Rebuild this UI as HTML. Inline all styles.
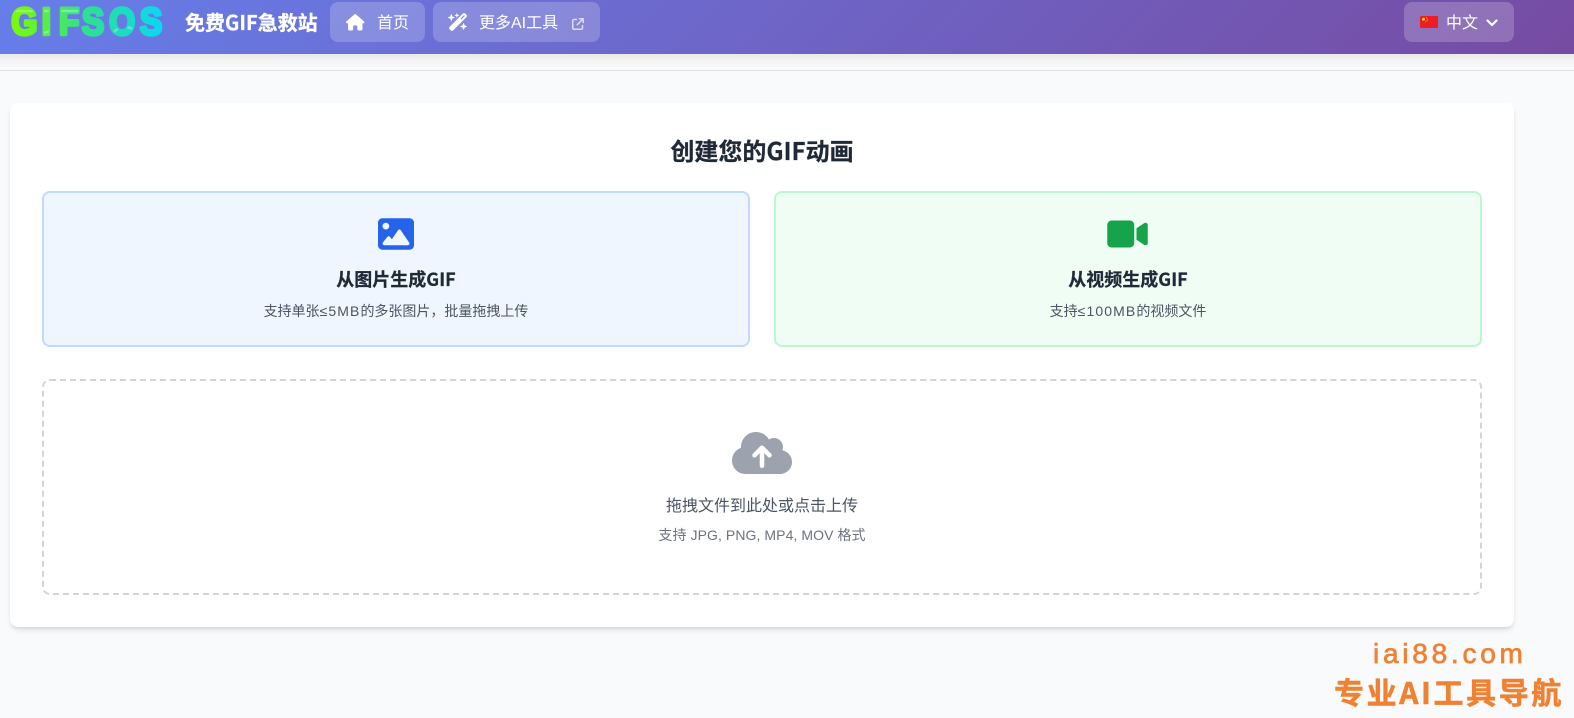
<!DOCTYPE html>
<html lang="zh-CN">
<head>
<meta charset="utf-8">
<title>GIFSOS</title>
<style>
*{box-sizing:border-box;margin:0;padding:0}
html,body{width:1574px;height:718px;overflow:hidden;background:#f9fafb;font-family:"Liberation Sans","Noto Sans CJK SC",sans-serif;color:#1f2937}
.abs,.abs-c{position:absolute;white-space:nowrap}
.abs-c{text-align:center}
.b{font-family:"Noto Sans CJK SC","Liberation Sans",sans-serif;font-weight:700;-webkit-text-stroke:.25px currentColor}
.ls{letter-spacing:1.1px}
#strip{position:absolute;left:0;top:54px;width:1574px;height:17px;background:linear-gradient(#e9e9ea 0%,#f4f4f5 45%,#fbfbfb 100%);border-bottom:1px solid #e2e4e9}
#hdr{position:absolute;left:0;top:0;width:1574px;height:54px;background:linear-gradient(135deg,#667eea 0%,#764ba2 100%)}
.btn{position:absolute;top:2px;height:40px;border-radius:8px;background:rgba(255,255,255,.2)}
.btn span{position:absolute;top:2px;line-height:40px;font-size:16px;color:#fff;white-space:nowrap}
svg{position:absolute;display:block}
#card{position:absolute;left:10px;top:103px;width:1504px;height:524px;background:#fff;border-radius:8px;box-shadow:0 4px 6px -1px rgba(0,0,0,.1),0 2px 4px -2px rgba(0,0,0,.1)}
.opt{position:absolute;top:191px;width:708px;height:156px;border-radius:8px;border:2px solid}
#drop{position:absolute;left:42px;top:379px;width:1440px;height:216px;border:2px dashed #d1d5db;border-radius:8px}
</style>
</head>
<body>
<div id="strip"></div>
<div id="hdr">
  <svg style="left:0;top:0" width="180" height="54" viewBox="0 0 180 54">
    <defs>
      <linearGradient id="lg" gradientUnits="userSpaceOnUse" x1="11" y1="0" x2="182" y2="0"><stop offset="0" stop-color="#7cfc00"/><stop offset=".5" stop-color="#2fe08f"/><stop offset="1" stop-color="#0bd8ee"/></linearGradient>
      <clipPath id="cl"><text transform="scale(.88 1)" x="13 47.5 67 93 124 159" y="34.3" font-family="Liberation Sans" font-weight="700" font-size="38">GIFSOS</text></clipPath>
    </defs>
    <g transform="scale(.88 1)">
      <text x="13 47.5 67 93 124 159" y="34.3" font-family="Liberation Sans" font-weight="700" font-size="38" fill="url(#lg)" stroke="url(#lg)" stroke-width="3.4" stroke-linejoin="round">GIFSOS</text>
    </g>
    <g clip-path="url(#cl)" fill="none" stroke="#fff" stroke-opacity=".3" stroke-width="2.5">
      <path d="M14 11H80"/>
      <path d="M44 33L56 29M113 33C120 25 130 25 137 33"/>
    </g>
  </svg>
  <div class="abs b" style="left:185px;top:7px;line-height:30px;font-size:20px;color:#fff">免费GIF急救站</div>
  <div class="btn" style="left:330px;width:95px">
    <svg style="left:16px;top:12px" width="18.5" height="16.5" viewBox="0 0 576 512" fill="#fff"><path d="M575.8 255.5c0 18-15 32.1-32 32.1h-32l.7 160.2c0 2.7-.2 5.4-.5 8.1V472c0 22.1-17.9 40-40 40H456c-1.1 0-2.2 0-3.3-.1c-1.4 .1-2.8 .1-4.2 .1H416 392c-22.1 0-40-17.9-40-40V448 384c0-17.7-14.3-32-32-32H256c-17.7 0-32 14.3-32 32v64 24c0 22.1-17.9 40-40 40H160 128.1c-1.5 0-3-.1-4.5-.2c-1.2 .1-2.4 .2-3.6 .2H104c-22.1 0-40-17.9-40-40V360c0-.9 0-1.9 .1-2.8V287.6H32c-18 0-32-14-32-32.1c0-9 3-17 10-24L266.4 8c7-7 15-8 22-8s15 2 21 7L564.8 231.5c8 7 12 15 11 24z"/></svg>
    <span style="left:47px">首页</span>
  </div>
  <div class="btn" style="left:433px;width:167px">
    <svg style="left:15px;top:11px" width="20" height="18" viewBox="0 0 576 512" fill="#fff"><path d="M234.7 42.7L197 56.8c-3 1.1-5 4-5 7.2s2 6.1 5 7.2l37.7 14.1L248.8 123c1.1 3 4 5 7.2 5s6.1-2 7.2-5l14.1-37.7L315 71.2c3-1.1 5-4 5-7.2s-2-6.1-5-7.2L277.3 42.7 263.2 5c-1.1-3-4-5-7.2-5s-6.1 2-7.2 5L234.7 42.7zM46.1 395.4c-18.7 18.7-18.7 49.1 0 67.9l34.6 34.6c18.7 18.7 49.1 18.7 67.9 0L529.9 116.5c18.7-18.7 18.7-49.1 0-67.9L495.3 14.1c-18.7-18.7-49.1-18.7-67.9 0L46.1 395.4zM484.6 82.6l-105 105-23.3-23.3 105-105 23.3 23.3zM7.5 117.2C3 118.9 0 123.2 0 128s3 9.1 7.5 10.8L64 160l21.2 56.5c1.7 4.5 6 7.5 10.8 7.5s9.1-3 10.8-7.5L128 160l56.5-21.2c4.5-1.7 7.5-6 7.5-10.8s-3-9.1-7.5-10.8L128 96 106.8 39.5C105.1 35 100.8 32 96 32s-9.1 3-10.8 7.5L64 96 7.5 117.2zm352 256c-4.5 1.7-7.5 6-7.5 10.8s3 9.1 7.5 10.8L416 416l21.2 56.5c1.7 4.5 6 7.5 10.8 7.5s9.1-3 10.8-7.5L480 416l56.5-21.2c4.5-1.7 7.5-6 7.5-10.8s-3-9.1-7.5-10.8L480 352l-21.2-56.5c-1.7-4.5-6-7.5-10.8-7.5s-9.1 3-10.8 7.5L416 352l-56.5 21.2z"/></svg>
    <span style="left:46px">更多AI工具</span>
    <svg style="left:139px;top:16px;opacity:.7" width="12" height="12" viewBox="0 0 512 512" fill="#fff"><path d="M320 0c-17.7 0-32 14.3-32 32s14.3 32 32 32h82.7L201.4 265.4c-12.5 12.5-12.5 32.8 0 45.3s32.8 12.5 45.3 0L448 109.3V192c0 17.7 14.3 32 32 32s32-14.3 32-32V32c0-17.7-14.3-32-32-32H320zM80 32C35.8 32 0 67.8 0 112V432c0 44.2 35.8 80 80 80H400c44.2 0 80-35.8 80-80V320c0-17.7-14.3-32-32-32s-32 14.3-32 32V432c0 8.8-7.2 16-16 16H80c-8.8 0-16-7.2-16-16V112c0-8.8 7.2-16 16-16H192c17.7 0 32-14.3 32-32s-14.3-32-32-32H80z"/></svg>
  </div>
  <div class="btn" style="left:1404px;width:110px">
    <svg style="left:16px;top:14px" width="18" height="12" viewBox="0 0 18 12"><rect width="18" height="12" rx="1.5" fill="#ee1c25"/><circle cx="3.5" cy="3.2" r="1.5" fill="#ffde00"/><circle cx="6.5" cy="1.8" r=".5" fill="#ffde00"/><circle cx="7.3" cy="3.2" r=".5" fill="#ffde00"/><circle cx="7" cy="4.8" r=".5" fill="#ffde00"/><circle cx="5.8" cy="5.8" r=".5" fill="#ffde00"/></svg>
    <span style="left:42px">中文</span>
    <svg style="left:82px;top:14px" width="12" height="12" viewBox="0 0 512 512" fill="#fff" stroke="#fff" stroke-width="30"><path d="M233.4 406.6c12.5 12.5 32.8 12.5 45.3 0l192-192c12.5-12.5 12.5-32.8 0-45.3s-32.8-12.5-45.3 0L256 338.7 86.6 169.4c-12.5-12.5-32.8-12.5-45.3 0s-12.5 32.8 0 45.3l192 192z"/></svg>
  </div>
</div>

<div id="card"></div>
<div class="abs-c b" style="left:10px;width:1504px;top:133px;line-height:34px;font-size:24px;color:#1f2937">创建您的GIF动画</div>

<div class="opt" style="left:42px;background:#eff6ff;border-color:#bfdbfe"></div>
<svg style="left:378px;top:216px" width="36" height="36" viewBox="0 0 512 512" fill="#2563eb"><path d="M0 96C0 60.7 28.7 32 64 32H448c35.3 0 64 28.7 64 64V416c0 35.3-28.7 64-64 64H64c-35.3 0-64-28.7-64-64V96zM323.8 202.5c-4.5-6.6-11.9-10.5-19.8-10.5s-15.4 3.9-19.8 10.5l-87 127.6L170.7 297c-4.6-5.7-11.5-9-18.7-9s-14.2 3.3-18.7 9l-64 80c-5.8 7.2-6.9 17.1-2.9 25.4s12.4 13.6 21.6 13.6h96 32H424c8.9 0 17.1-4.9 21.2-12.8s3.6-17.4-1.4-24.7l-120-176zM112 192a48 48 0 1 0 0-96 48 48 0 1 0 0 96z"/></svg>
<div class="abs-c b" style="left:42px;width:708px;top:266px;line-height:26px;font-size:18px;color:#1f2937">从图片生成GIF</div>
<div class="abs-c" style="left:42px;width:708px;top:301px;line-height:20px;font-size:14px;color:#4b5563">支持单张<span class="ls">≤5MB</span>的多张图片，批量拖拽上传</div>

<div class="opt" style="left:774px;background:#f0fdf4;border-color:#bbf7d0"></div>
<svg style="left:1107px;top:216px" width="41" height="36" viewBox="0 0 576 512" fill="#16a34a"><path d="M0 128C0 92.7 28.7 64 64 64H320c35.3 0 64 28.7 64 64V384c0 35.3-28.7 64-64 64H64c-35.3 0-64-28.7-64-64V128zM559.1 99.8c10.4 5.6 16.9 16.4 16.9 28.2V384c0 11.8-6.5 22.6-16.9 28.2s-23 5-32.9-1.6l-96-64L416 337.1V320 192 174.9l14.2-9.5 96-64c9.8-6.5 22.4-7.2 32.9-1.6z"/></svg>
<div class="abs-c b" style="left:774px;width:708px;top:266px;line-height:26px;font-size:18px;color:#1f2937">从视频生成GIF</div>
<div class="abs-c" style="left:774px;width:708px;top:301px;line-height:20px;font-size:14px;color:#4b5563">支持<span class="ls">≤100MB</span>的视频文件</div>

<div id="drop"></div>
<svg style="left:732px;top:429px" width="60" height="48" viewBox="0 0 640 512" fill="#9ca3af"><path d="M144 480C64.5 480 0 415.5 0 336c0-62.8 40.2-116.2 96.2-135.9c-.1-2.7-.2-5.4-.2-8.1c0-88.4 71.6-160 160-160c59.3 0 111 32.2 138.7 80.2C409.9 102 428.3 96 448 96c53 0 96 43 96 96c0 12.2-2.3 23.8-6.4 34.6C596 238.4 640 290.1 640 352c0 70.7-57.3 128-128 128H144zm79-217c-9.4 9.4-9.4 24.6 0 33.9s24.6 9.4 33.9 0l39-39V392c0 13.3 10.7 24 24 24s24-10.7 24-24V257.9l39 39c9.4 9.4 24.6 9.4 33.9 0s9.4-24.6 0-33.9l-80-80c-9.4-9.4-24.6-9.4-33.9 0l-80 80z"/></svg>
<div class="abs-c" style="left:42px;width:1440px;top:495px;line-height:24px;font-size:16px;color:#4b5563">拖拽文件到此处或点击上传</div>
<div class="abs-c" style="left:42px;width:1440px;top:525px;line-height:20px;font-size:14px;color:#6b7280;letter-spacing:.08px">支持 JPG, PNG, MP4, MOV 格式</div>

<div class="abs" style="left:1373px;top:636px;line-height:36px;font-size:28px;letter-spacing:3.75px;color:#f08132;-webkit-text-stroke:.7px #f08132">iai88.com</div>
<div class="abs b" style="left:1334px;top:671px;line-height:40px;font-size:30px;letter-spacing:2.6px;color:#f08132;-webkit-text-stroke:.5px #f08132">专业AI工具导航</div>
</body>
</html>
